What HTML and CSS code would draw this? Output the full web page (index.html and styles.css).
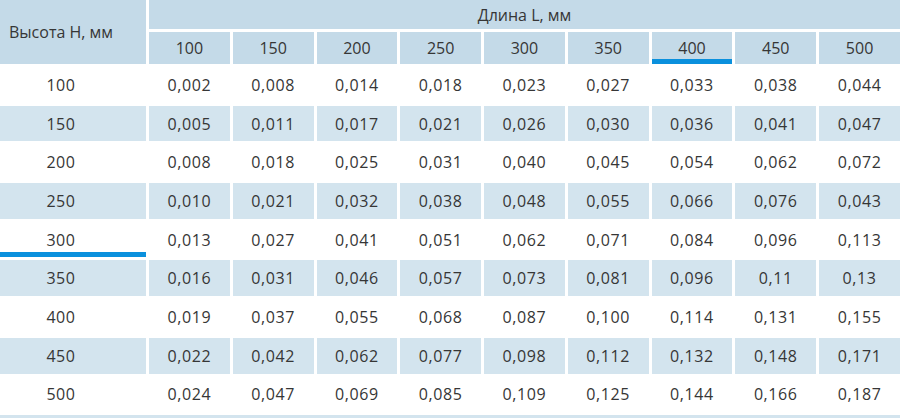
FILE: index.html
```html
<!DOCTYPE html>
<html lang="ru">
<head>
<meta charset="utf-8">
<title>Таблица</title>
<link rel="stylesheet" href="styles.css">
</head>
<body>
<div class="wrap">
<table class="grid">
<colgroup><col class="c-first"><col span="9"></colgroup>
<thead>
<tr class="h1"><th class="corner" rowspan="2">Высота Н, мм</th><th colspan="9">Длина L, мм</th></tr>
<tr class="h2"><th>100</th><th>150</th><th>200</th><th>250</th><th>300</th><th>350</th><th class="mark">400</th><th>450</th><th>500</th></tr>
</thead>
<tbody>
<tr><td class="first">100</td><td>0,002</td><td>0,008</td><td>0,014</td><td>0,018</td><td>0,023</td><td>0,027</td><td>0,033</td><td>0,038</td><td>0,044</td></tr>
<tr class="alt"><td class="first">150</td><td>0,005</td><td>0,011</td><td>0,017</td><td>0,021</td><td>0,026</td><td>0,030</td><td>0,036</td><td>0,041</td><td>0,047</td></tr>
<tr><td class="first">200</td><td>0,008</td><td>0,018</td><td>0,025</td><td>0,031</td><td>0,040</td><td>0,045</td><td>0,054</td><td>0,062</td><td>0,072</td></tr>
<tr class="alt"><td class="first">250</td><td>0,010</td><td>0,021</td><td>0,032</td><td>0,038</td><td>0,048</td><td>0,055</td><td>0,066</td><td>0,076</td><td>0,043</td></tr>
<tr><td class="first mark">300</td><td>0,013</td><td>0,027</td><td>0,041</td><td>0,051</td><td>0,062</td><td>0,071</td><td>0,084</td><td>0,096</td><td>0,113</td></tr>
<tr class="alt"><td class="first">350</td><td>0,016</td><td>0,031</td><td>0,046</td><td>0,057</td><td>0,073</td><td>0,081</td><td>0,096</td><td>0,11</td><td>0,13</td></tr>
<tr><td class="first">400</td><td>0,019</td><td>0,037</td><td>0,055</td><td>0,068</td><td>0,087</td><td>0,100</td><td>0,114</td><td>0,131</td><td>0,155</td></tr>
<tr class="alt"><td class="first">450</td><td>0,022</td><td>0,042</td><td>0,062</td><td>0,077</td><td>0,098</td><td>0,112</td><td>0,132</td><td>0,148</td><td>0,171</td></tr>
<tr><td class="first">500</td><td>0,024</td><td>0,047</td><td>0,069</td><td>0,085</td><td>0,109</td><td>0,125</td><td>0,144</td><td>0,166</td><td>0,187</td></tr>
<tr class="tail"><td colspan="10"></td></tr>
</tbody>
</table>
</div>
</body>
</html>
```
FILE: styles.css
```css
html, body {
  margin: 0;
  padding: 0;
  background: #ffffff;
}
.wrap {
  width: 900px;
  height: 418px;
  overflow: hidden;
}
.grid {
  width: 906px;
  margin: -3px;
  border-collapse: separate;
  border-spacing: 3px;
  table-layout: fixed;
  font-family: "Open Sans", "Liberation Sans", sans-serif;
  font-size: 16px;
  color: #363636;
}
.c-first {
  width: 146px;
}
.grid th,
.grid td {
  padding: 0;
  text-align: center;
  vertical-align: middle;
  font-weight: normal;
  white-space: nowrap;
}
.grid th {
  background: #c4dae8;
}
.grid th.corner {
  padding-right: 24px;
  padding-bottom: 1px;
}
.grid .first {
  padding-right: 24px;
}
.grid tbody td {
  letter-spacing: 0.6px;
}
.h1 {
  height: 29px;
}
.h2 {
  height: 32px;
}
.grid tbody tr {
  height: 35.7px;
}
.grid tr.alt td {
  background: #d3e4ee;
}
.grid .mark {
  box-shadow: inset 0 -5px 0 #0a90dd;
}
.grid tbody tr.tail {
  height: 10px;
}
.grid tr.tail td {
  background: #d3e4ee;
}
```
